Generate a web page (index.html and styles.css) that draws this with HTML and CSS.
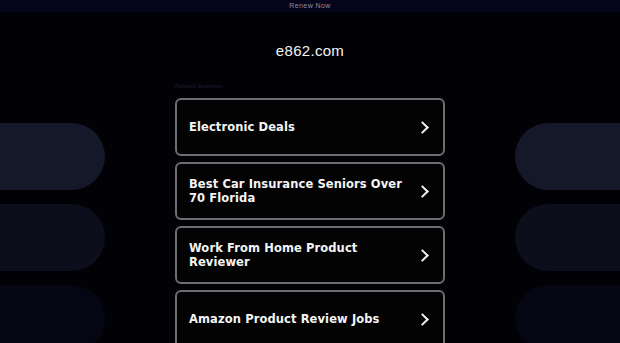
FILE: index.html
```html
<!DOCTYPE html>
<html>

<head>
    <title>e862.com</title>
    <meta name="viewport" content="width=device-width, initial-scale=1.0">
    <link rel="stylesheet" href="styles.css">
</head>

<body>
    <div class="top-bar">Renew Now</div>
    <div class="bg-pills left">
        <div class="pill p1"></div>
        <div class="pill p2"></div>
        <div class="pill p3"></div>
    </div>
    <div class="bg-pills right">
        <div class="pill p1"></div>
        <div class="pill p2"></div>
        <div class="pill p3"></div>
    </div>
    <h1 class="domain">e862.com</h1>
    <div class="results">
        <div class="label">Related Searches</div>
        <a class="card" href="#"><span>Electronic Deals</span><i class="arrow"></i></a>
        <a class="card" href="#"><span>Best Car Insurance Seniors Over 70 Florida</span><i class="arrow"></i></a>
        <a class="card" href="#"><span>Work From Home Product Reviewer</span><i class="arrow"></i></a>
        <a class="card" href="#"><span>Amazon Product Review Jobs</span><i class="arrow"></i></a>
    </div>
</body>

</html>
```

FILE: styles.css
```css
* {
    box-sizing: border-box;
    padding: 0;
    margin: 0;
}

body {
    background-color: #020206;
    color: white;
    font-family: "Liberation Sans", Arial, sans-serif;
    height: 100vh;
    overflow: hidden;
    position: relative;
}

.top-bar {
    height: 12px;
    background-color: #04051a;
    color: #8c8ca8;
    font-size: 7px;
    line-height: 12px;
    text-align: center;
    letter-spacing: 0.4px;
}

.domain {
    font-size: 15px;
    font-weight: normal;
    text-align: center;
    margin-top: 30px;
    color: #f2f2f2;
    letter-spacing: 0.3px;
}

.bg-pills {
    position: absolute;
    top: 123px;
    display: flex;
    flex-direction: column;
    gap: 14px;
}

.bg-pills.left {
    left: 0;
}

.bg-pills.right {
    right: 0;
}

.pill {
    width: 105px;
    height: 67px;
}

.left .pill {
    border-radius: 0 34px 34px 0;
}

.right .pill {
    border-radius: 34px 0 0 34px;
}

.p1 {
    background-color: #151829;
}

.p2 {
    background-color: #0d0e1c;
}

.p3 {
    background-color: #050614;
}

.results {
    width: 270px;
    margin: 24px auto 0;
    position: relative;
    display: flex;
    flex-direction: column;
    gap: 6px;
}

.label {
    font-size: 6px;
    color: #1c1c30;
    margin-bottom: 3px;
}

.card {
    display: flex;
    align-items: center;
    justify-content: space-between;
    height: 58px;
    border: 2px solid #6e6e72;
    border-radius: 6px;
    background-color: #030304;
    padding: 0 16px 0 12px;
    color: #f4f4f4;
    text-decoration: none;
    font-family: "DejaVu Sans", Verdana, sans-serif;
    font-weight: bold;
    font-size: 11.5px;
    line-height: 14px;
    letter-spacing: 0.1px;
}

.card span {
    max-width: 225px;
}

.arrow {
    width: 9px;
    height: 9px;
    border-top: 2px solid #f4f4f4;
    border-right: 2px solid #f4f4f4;
    transform: rotate(45deg);
}
```
